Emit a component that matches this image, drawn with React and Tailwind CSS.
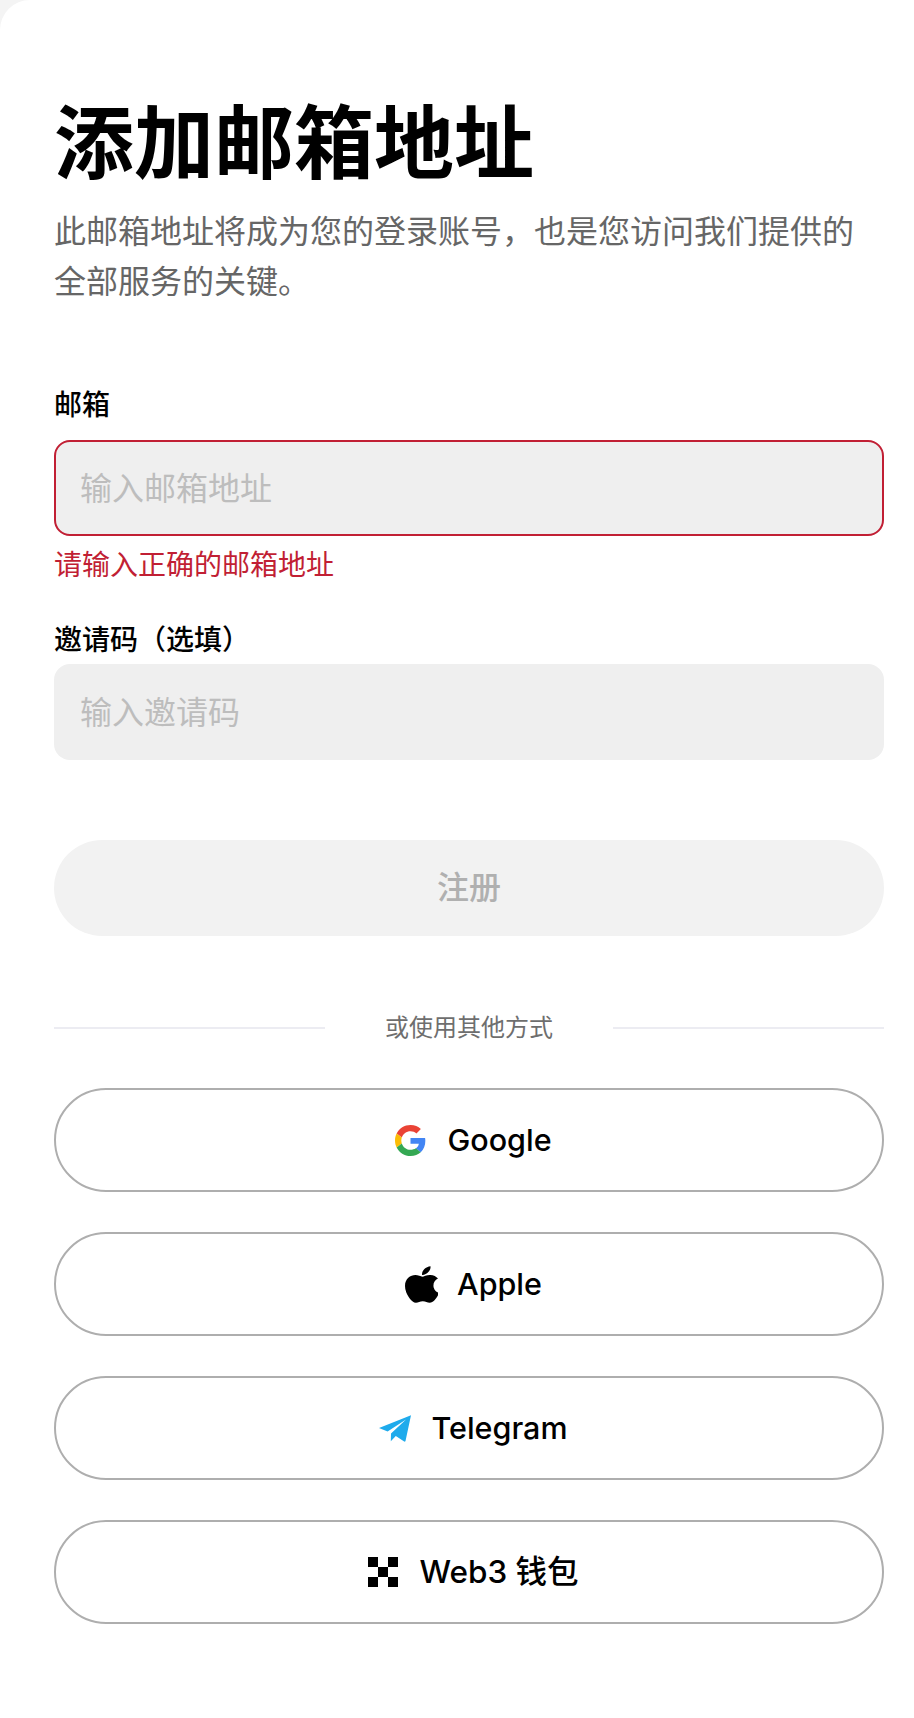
import React from 'react';

const cjk = "font-['Inter','Noto_Sans_CJK_SC',sans-serif]";

const GoogleIcon = () => (
  <svg viewBox="0 0 48 48" className="w-[31px] h-[31px] shrink-0">
    <path fill="#EA4335" d="M24 9.5c3.54 0 6.71 1.22 9.21 3.6l6.85-6.85C35.9 2.38 30.47 0 24 0 14.62 0 6.51 5.38 2.56 13.22l7.98 6.19C12.43 13.72 17.74 9.5 24 9.5z" />
    <path fill="#4285F4" d="M46.98 24.55c0-1.57-.15-3.09-.38-4.55H24v9.02h12.94c-.58 2.96-2.26 5.48-4.78 7.18l7.73 6c4.51-4.18 7.09-10.36 7.09-17.65z" />
    <path fill="#FBBC05" d="M10.53 28.59c-.48-1.45-.76-2.99-.76-4.59s.27-3.14.76-4.59l-7.98-6.19C.92 16.46 0 20.12 0 24c0 3.88.92 7.54 2.56 10.78l7.97-6.19z" />
    <path fill="#34A853" d="M24 48c6.48 0 11.93-2.13 15.89-5.81l-7.73-6c-2.15 1.45-4.92 2.3-8.16 2.3-6.26 0-11.57-4.22-13.47-9.91l-7.98 6.19C6.51 42.62 14.62 48 24 48z" />
  </svg>
);

const AppleIcon = () => (
  <svg viewBox="4 30 365 452" preserveAspectRatio="none" className="w-[33px] h-[37px] shrink-0" fill="#000">
    <path d="M318.7 268.7c-.2-36.7 16.4-64.4 50-84.8-18.8-26.9-47.2-41.7-84.7-44.6-35.5-2.8-74.3 20.7-88.5 20.7-15 0-49.4-19.7-76.4-19.7C63.3 141.2 4 184.8 4 273.5q0 39.3 14.4 81.2c12.8 36.7 59 126.7 107.2 125.2 25.2-.6 43-17.9 75.8-17.9 31.8 0 48.3 17.9 76.4 17.9 48.6-.7 90.4-82.5 102.6-119.3-65.2-30.7-61.7-90-61.7-91.9zm-56.6-164.2c27.3-32.4 24.8-61.9 24-72.5-24.1 1.4-52 16.4-67.9 34.9-17.5 19.8-27.8 44.3-25.6 71.9 26.1 2 49.9-11.4 69.5-34.3z" />
  </svg>
);

const TelegramIcon = () => (
  <svg viewBox="0 0 32 27" className="w-[32px] h-[27px] shrink-0">
    <path fill="#1fabec" d="M32 0.2 0 13l8.6 3.6L27 4.4 12 18.4l-0.2 7.8 5-5.2 8.4 5.6c0.5 0.3 1.1 0 1.3-0.6L32 0.2z" />
  </svg>
);

const Web3Icon = () => (
  <div className="grid grid-cols-3 w-[30px] h-[30px] shrink-0">
    {[1, 0, 1, 0, 1, 0, 1, 0, 1].map((on, i) => (
      <div key={i} className={on ? 'bg-black' : ''}></div>
    ))}
  </div>
);

const socials = [
  { label: 'Google', icon: <GoogleIcon />, gap: 'gap-[21px]', size: 'text-[30.5px]' },
  { label: 'Apple', icon: <AppleIcon />, gap: 'gap-[19px]', size: 'text-[30.5px]' },
  { label: 'Telegram', icon: <TelegramIcon />, gap: 'gap-[20px]', size: 'text-[30.5px]' },
  { label: 'Web3 钱包', icon: <Web3Icon />, gap: 'gap-[21px]', size: 'text-[31.5px]' },
];

const App = () => {
  return (
    <div className={`w-[914px] h-[1718px] bg-[#f4f4f4] overflow-hidden ${cjk}`}>
      <div className="h-full bg-white rounded-tl-[30px] pl-[54px] pr-[30px] pt-[99px]">
        <h1 className="text-[80px] leading-[88px] font-bold text-black">添加邮箱地址</h1>

        <p className="mt-[20px] text-[32px] leading-[50px] text-[#666666]">
          此邮箱地址将成为您的登录账号，也是您访问我们提供的<br />全部服务的关键。
        </p>

        <label className="block mt-[78px] text-[28px] leading-[40px] font-medium text-black">邮箱</label>
        <input
          placeholder="输入邮箱地址"
          className="block mt-[15px] w-full h-[96px] rounded-[16px] border-2 border-[#c11f34] bg-[#efefef] px-[24px] text-[32px] placeholder:text-[#bdbdbd] outline-none"
        />
        <div className="mt-[9px] text-[28px] leading-[40px] text-[#c11f34]">请输入正确的邮箱地址</div>

        <label className="block mt-[35px] text-[28px] leading-[40px] font-medium text-black">邀请码（选填）</label>
        <input
          placeholder="输入邀请码"
          className="block mt-[4px] w-full h-[96px] rounded-[16px] bg-[#efefef] px-[26px] text-[32px] placeholder:text-[#bdbdbd] outline-none"
        />

        <button className="block mt-[80px] w-full h-[96px] rounded-full bg-[#f2f2f2] text-[32px] font-medium text-[#b0b0b0]">
          注册
        </button>

        <div className="flex items-center mt-[72px] h-[40px]">
          <div className="flex-1 h-[2px] bg-[#ececf2]"></div>
          <span className="w-[288px] text-center text-[24px] text-[#6e6e6e]">或使用其他方式</span>
          <div className="flex-1 h-[2px] bg-[#ececf2]"></div>
        </div>

        <div className="flex flex-col gap-[40px] mt-[40px]">
          {socials.map(item => (
            <button
              key={item.label}
              className={`flex items-center justify-center h-[104px] pl-[9px] rounded-full border-2 border-[#aeaeae] bg-white font-medium text-black ${item.gap} ${item.size}`}
            >
              {item.icon}
              <span>{item.label}</span>
            </button>
          ))}
        </div>
      </div>
    </div>
  );
};

export default App;
